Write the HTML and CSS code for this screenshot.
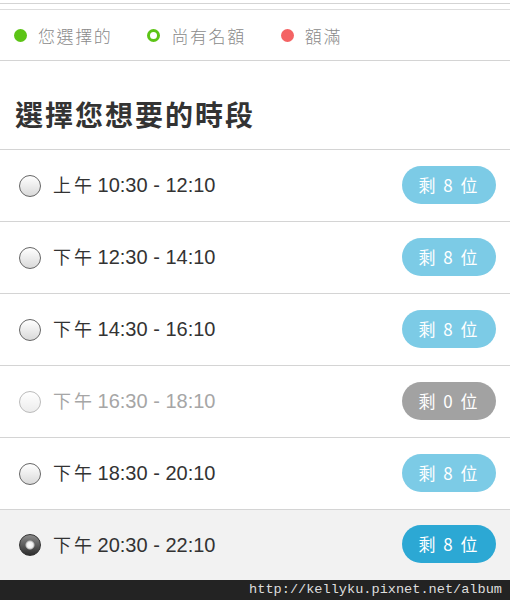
FILE: index.html
```html
<!DOCTYPE html>
<html lang="zh-Hant">
<head>
    <meta charset="UTF-8">
    <meta name="viewport" content="width=device-width, initial-scale=1.0">
    <title>選擇時段</title>
    <link rel="stylesheet" href="styles.css">
</head>
<body>
    <div class="top-edge"></div>

    <div class="legend">
        <span class="legend-item"><span class="dot dot-chosen"></span>您選擇的</span>
        <span class="legend-item"><span class="dot dot-open"></span>尚有名額</span>
        <span class="legend-item"><span class="dot dot-full"></span>額滿</span>
    </div>

    <div class="title-box">
        <h2>選擇您想要的時段</h2>
    </div>

    <form class="slots">
        <label class="slot">
            <input type="radio" name="slot" class="radio">
            <span class="time"><span class="period">上午</span> 10:30 - 12:10</span>
            <span class="badge">剩 8 位</span>
        </label>
        <label class="slot">
            <input type="radio" name="slot" class="radio">
            <span class="time"><span class="period">下午</span> 12:30 - 14:10</span>
            <span class="badge">剩 8 位</span>
        </label>
        <label class="slot">
            <input type="radio" name="slot" class="radio">
            <span class="time"><span class="period">下午</span> 14:30 - 16:10</span>
            <span class="badge">剩 8 位</span>
        </label>
        <label class="slot disabled">
            <input type="radio" name="slot" class="radio" disabled>
            <span class="time"><span class="period">下午</span> 16:30 - 18:10</span>
            <span class="badge badge-full">剩 0 位</span>
        </label>
        <label class="slot">
            <input type="radio" name="slot" class="radio">
            <span class="time"><span class="period">下午</span> 18:30 - 20:10</span>
            <span class="badge">剩 8 位</span>
        </label>
        <label class="slot selected">
            <input type="radio" name="slot" class="radio" checked>
            <span class="time"><span class="period">下午</span> 20:30 - 22:10</span>
            <span class="badge badge-active">剩 8 位</span>
        </label>
    </form>

    <div class="watermark">http://kellyku.pixnet.net/album</div>
</body>
</html>
```

FILE: styles.css
```css
body {
    font-family: "Liberation Sans", "Noto Sans CJK TC", sans-serif;
    background-color: #fff;
    color: #333;
    margin: 0;
    width: 510px;
    overflow: hidden;
}
.top-edge {
    height: 3px;
    border-bottom: 1px solid #d4d4d4;
    margin-bottom: 5px;
}
.legend {
    height: 50px;
    border-top: 1px solid #ddd;
    border-bottom: 1px solid #d4d4d4;
    display: flex;
    align-items: center;
    padding-left: 14px;
    gap: 35px;
    font-family: "Noto Sans CJK TC", sans-serif;
    font-size: 17px;
    font-weight: 300;
    letter-spacing: 1.6px;
    color: #8a8a8a;
}
.legend-item {
    display: flex;
    align-items: center;
    gap: 11px;
}
.dot {
    width: 13px;
    height: 13px;
    border-radius: 50%;
    box-sizing: border-box;
}
.dot-chosen {
    background: #5cc416;
}
.dot-open {
    border: 3px solid #5cc416;
}
.dot-full {
    background: #f46364;
}
.title-box {
    height: 88px;
    border-bottom: 1px solid #d4d4d4;
    padding: 0 15px;
}
h2 {
    margin: 0;
    padding-top: 33px;
    font-family: "Noto Sans CJK TC", sans-serif;
    font-size: 28px;
    line-height: 40px;
    font-weight: bold;
    letter-spacing: 2px;
    color: #333;
}
.slots {
    margin: 0;
}
.slot {
    height: 71px;
    border-bottom: 1px solid #d4d4d4;
    display: flex;
    align-items: center;
    padding: 0 14px 0 19px;
    cursor: pointer;
}
.slot:last-child {
    height: 70px;
    border-bottom: none;
}
.slot.selected {
    background: #f2f2f2;
}
.radio {
    appearance: none;
    -webkit-appearance: none;
    box-sizing: border-box;
    margin: 0 12px 0 0;
    width: 22px;
    height: 22px;
    border: 1px solid #666;
    border-radius: 50%;
    background: linear-gradient(#fff, #d9d9d9);
    flex-shrink: 0;
}
.radio:checked {
    border-color: #333;
    background: radial-gradient(circle, #fff 0, #eee 3px, #bbb 4px, rgba(0, 0, 0, 0) 5px),
        linear-gradient(#8a8a8a, #2e2e2e);
}
.radio:disabled {
    border-color: #bbb;
    background: linear-gradient(#fff, #ececec);
}
.time {
    flex: 1;
    font-size: 20px;
    line-height: 24px;
    margin-top: -2px;
}
.period {
    font-family: "Noto Sans CJK TC", sans-serif;
    font-size: 18px;
    letter-spacing: 3px;
    margin-right: -3px;
}
.disabled .time {
    color: #a6a6a6;
}
.badge {
    width: 94px;
    height: 38px;
    line-height: 38px;
    border-radius: 19px;
    margin-top: -2px;
    background: #7ccbe6;
    color: #fff;
    text-align: center;
    font-family: "Noto Sans CJK TC", sans-serif;
    font-size: 17px;
    letter-spacing: 2px;
}
.badge-full {
    background: #a2a2a2;
}
.badge-active {
    background: #2ca8d4;
}
.watermark {
    height: 20px;
    background: #232323;
    color: #ddd;
    font-family: "Liberation Mono", monospace;
    font-size: 13.6px;
    line-height: 20px;
    text-align: right;
    padding-right: 8px;
}
```
